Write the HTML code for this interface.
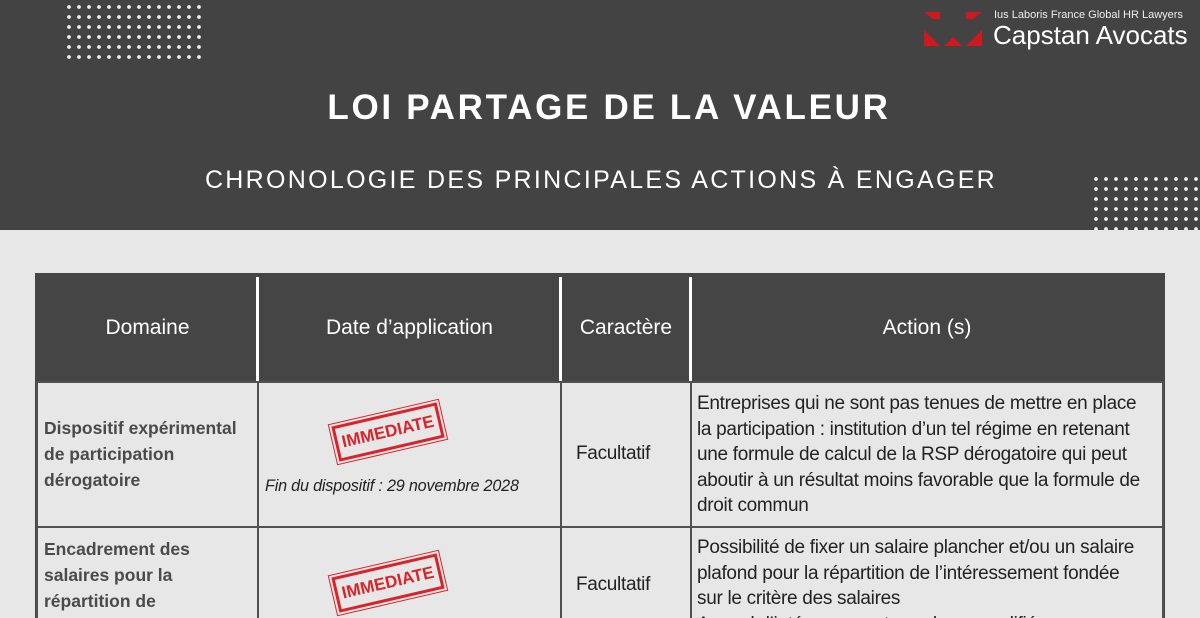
<!DOCTYPE html>
<html style="width:1200px;height:618px;overflow:hidden"><head><meta charset="utf-8"><style>
*{margin:0;padding:0;box-sizing:border-box}
body{width:1200px;height:618px;overflow:hidden;background:#e8e7e7;font-family:"Liberation Sans",sans-serif;position:relative}
.hdr{position:absolute;left:0;top:0;width:1200px;height:230px;background:#434343}
.dots{position:absolute;background-image:radial-gradient(circle,#f0f0f0 1.6px,transparent 2.2px);background-size:10px 10px}
.t1{position:absolute;top:88px;left:9px;width:1200px;text-align:center;color:#fff;font-weight:bold;font-size:35px;letter-spacing:2.7px}
.t2{position:absolute;top:166px;left:1px;width:1200px;text-align:center;color:#fff;font-size:25px;letter-spacing:2.3px}
.a{position:absolute}
.hd{background:#454545}
.th{position:absolute;top:273px;height:109px;color:#fff;font-size:21px;display:flex;align-items:center;justify-content:center}
.vl{position:absolute;background:#fff;width:3px}
.cell{position:absolute;border:2px solid #505050}
.dom{font-weight:bold;color:#4a4a4a;font-size:17.5px;line-height:26px}
.txt{color:#222;font-size:19px;line-height:25.5px;letter-spacing:-0.3px}
.stamp{position:absolute;width:108px;height:36px;border:3px solid #d9242b;outline:1.5px solid #d9242b;outline-offset:2px;transform:rotate(-13deg);color:#d9242b;font-weight:bold;font-size:17px;text-align:center;line-height:30px;font-family:"Liberation Sans Narrow","Liberation Sans",sans-serif}
</style></head><body>
<div class="hdr"></div>
<div class="dots" style="left:64px;top:2px;width:140px;height:60px"></div>
<div class="dots" style="left:1091px;top:174px;width:109px;height:56px"></div>
<svg class="a" style="left:920px;top:10px" width="66" height="38" viewBox="0 0 66 38">
<polygon points="4,2 20,2 20,9 13,9" fill="#d0181f"/>
<polygon points="62,2 46,2 46,9 53,9" fill="#d0181f"/>
<polygon points="4,36 4,20 12,28 20,36" fill="#d0181f"/>
<polygon points="24,36 42,36 33,27" fill="#d0181f"/>
<polygon points="62,36 62,20 54,28 46,36" fill="#d0181f"/>
</svg>
<div class="a" style="left:994px;top:9px;color:#eee;font-size:11px">Ius Laboris France Global HR Lawyers</div>
<div class="a" style="left:993px;top:20px;color:#fff;font-size:26px">Capstan Avocats</div>
<div class="t1">LOI PARTAGE DE LA VALEUR</div>
<div class="t2">CHRONOLOGIE DES PRINCIPALES ACTIONS À ENGAGER</div>

<div class="a hd" style="left:35px;top:273px;width:1130px;height:110px"></div>
<div class="a hd" style="left:35px;top:273px;width:3px;height:345px"></div>
<div class="a hd" style="left:1162px;top:273px;width:3px;height:345px"></div>
<div class="th" style="left:38px;width:219px">Domaine</div>
<div class="th" style="left:259px;width:301px">Date d’application</div>
<div class="th" style="left:562px;width:128px">Caractère</div>
<div class="th" style="left:692px;width:470px">Action (s)</div>
<div class="vl" style="left:256px;top:277px;height:104px"></div>
<div class="vl" style="left:559px;top:277px;height:104px"></div>
<div class="vl" style="left:689px;top:277px;height:104px"></div>

<div class="cell" style="left:36px;top:381px;width:223px;height:147px"></div>
<div class="cell" style="left:257px;top:381px;width:305px;height:147px"></div>
<div class="cell" style="left:560px;top:381px;width:132px;height:147px"></div>
<div class="cell" style="left:690px;top:381px;width:474px;height:147px"></div>
<div class="cell" style="left:36px;top:526px;width:223px;height:100px"></div>
<div class="cell" style="left:257px;top:526px;width:305px;height:100px"></div>
<div class="cell" style="left:560px;top:526px;width:132px;height:100px"></div>
<div class="cell" style="left:690px;top:526px;width:474px;height:100px"></div>

<div class="a dom" style="left:44px;top:415px">Dispositif expérimental<br>de participation<br>dérogatoire</div>
<div class="a dom" style="left:44px;top:536px">Encadrement des<br>salaires pour la<br>répartition de<br>l’intéressement</div>
<div class="stamp" style="left:334px;top:414px">IMMEDIATE</div>
<div class="stamp" style="left:334px;top:565px">IMMEDIATE</div>
<div class="a" style="left:265px;top:477px;font-size:16.2px;font-style:italic;color:#222;letter-spacing:-0.2px">Fin du dispositif : 29 novembre 2028</div>
<div class="a txt" style="left:576px;top:441px">Facultatif</div>
<div class="a txt" style="left:576px;top:572px">Facultatif</div>
<div class="a txt" style="left:697px;top:391px">Entreprises qui ne sont pas tenues de mettre en place<br>la participation : institution d’un tel régime en retenant<br>une formule de calcul de la RSP dérogatoire qui peut<br>aboutir à un résultat moins favorable que la formule de<br>droit commun</div>
<div class="a txt" style="left:697px;top:535px">Possibilité de fixer un salaire plancher et/ou un salaire<br>plafond pour la répartition de l’intéressement fondée<br>sur le critère des salaires<br>Accord d’intéressement conclu ou modifié</div>
</body></html>
